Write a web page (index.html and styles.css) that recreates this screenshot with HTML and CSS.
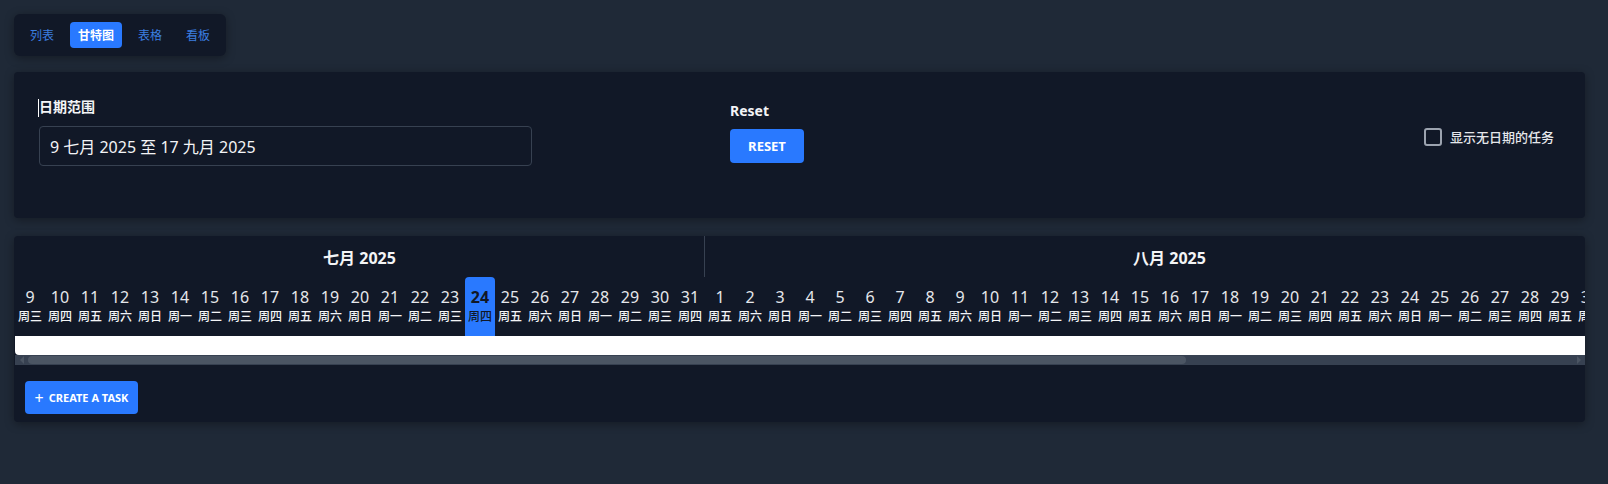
FILE: index.html
```html
<!DOCTYPE html>
<html lang="zh-CN">
<head>
    <meta charset="UTF-8">
    <meta name="viewport" content="width=device-width, initial-scale=1.0">
    <title>甘特图</title>
    <link rel="stylesheet" href="styles.css">
</head>
<body>
    <div class="view-tabs">
        <button class="view-tab">列表</button>
        <button class="view-tab active">甘特图</button>
        <button class="view-tab">表格</button>
        <button class="view-tab">看板</button>
    </div>

    <section class="panel filter-panel">
        <div class="field date-field">
            <label class="field-label"><span class="caret"></span>日期范围</label>
            <div class="date-input">9 七月 2025 至 17 九月 2025</div>
        </div>
        <div class="field reset-field">
            <div class="field-label">Reset</div>
            <button class="btn btn-primary btn-reset">RESET</button>
        </div>
        <label class="checkbox-field">
            <span class="checkbox"></span>
            <span>显示无日期的任务</span>
        </label>
    </section>

    <section class="panel gantt-panel">
        <div class="gantt-scroll">
            <div class="gantt-timeline">
                <div class="month-row" id="monthRow"></div>
                <div class="day-row" id="dayRow"></div>
                <div class="gantt-body"></div>
            </div>
        </div>
        <div class="scrollbar">
            <span class="scroll-btn"><span class="arrow arrow-left"></span></span>
            <div class="scroll-track"><div class="scroll-thumb"></div></div>
            <span class="scroll-btn"><span class="arrow arrow-right"></span></span>
        </div>
        <div class="gantt-footer">
            <button class="btn btn-primary btn-create"><span class="plus">+</span>CREATE A TASK</button>
        </div>
    </section>

    <script>
        // 时间轴参数
        const DAY_WIDTH = 30;
        const monthNames = ['一月', '二月', '三月', '四月', '五月', '六月', '七月', '八月', '九月', '十月', '十一月', '十二月'];
        const weekNames = ['周日', '周一', '周二', '周三', '周四', '周五', '周六'];

        const startDate = new Date(2025, 6, 9);
        const endDate = new Date(2025, 8, 17);
        const today = new Date(2025, 6, 24);

        function buildTimeline() {
            const monthRow = document.getElementById('monthRow');
            const dayRow = document.getElementById('dayRow');
            const groups = [];

            for (let d = new Date(startDate); d <= endDate; d.setDate(d.getDate() + 1)) {
                const key = d.getFullYear() + '-' + d.getMonth();
                let group = groups[groups.length - 1];
                if (!group || group.key !== key) {
                    group = { key: key, label: monthNames[d.getMonth()] + ' ' + d.getFullYear(), days: 0 };
                    groups.push(group);
                }
                group.days++;

                const cell = document.createElement('div');
                cell.className = 'day-cell';
                if (d.getTime() === today.getTime()) {
                    cell.classList.add('today');
                }
                cell.innerHTML = '<span class="day-num">' + d.getDate() + '</span>' +
                    '<span class="day-week">' + weekNames[d.getDay()] + '</span>';
                dayRow.appendChild(cell);
            }

            groups.forEach(function (group) {
                const cell = document.createElement('div');
                cell.className = 'month-cell';
                cell.style.width = (group.days * DAY_WIDTH) + 'px';
                cell.textContent = group.label;
                monthRow.appendChild(cell);
            });
        }

        buildTimeline();
    </script>
</body>
</html>
```

FILE: styles.css
```css
* {
    margin: 0;
    padding: 0;
    box-sizing: border-box;
}

body {
    font-family: 'Noto Sans', 'Noto Sans CJK SC', sans-serif;
    background: #1f2937;
    color: #f3f4f6;
    padding: 14px 23px 0 14px;
    min-height: 100vh;
}

button {
    font-family: inherit;
    border: none;
    cursor: pointer;
}

.panel {
    background: #111827;
    border-radius: 4px;
    box-shadow: 0 2px 10px rgba(0, 0, 0, 0.35);
}

/* 视图切换 */
.view-tabs {
    display: inline-flex;
    gap: 8px;
    padding: 8px;
    background: #111827;
    border-radius: 6px;
    box-shadow: 0 2px 10px rgba(0, 0, 0, 0.35);
}

.view-tab {
    height: 26px;
    padding: 0 8px;
    background: transparent;
    color: #3b7fe0;
    font-size: 12px;
    border-radius: 4px;
}

.view-tab.active {
    background: #2979ff;
    color: #fff;
    font-weight: bold;
}

/* 筛选区 */
.filter-panel {
    margin-top: 16px;
    height: 146px;
    padding: 26px 24px 0 25px;
    display: flex;
    align-items: flex-start;
}

.field {
    display: flex;
    flex-direction: column;
}

.date-field {
    width: 691px;
    gap: 10px;
}

.field-label {
    position: relative;
    font-size: 14px;
    font-weight: bold;
    line-height: 18px;
    color: #f3f4f6;
}

.caret {
    position: absolute;
    left: -1px;
    top: 1px;
    width: 1px;
    height: 18px;
    background: #fff;
}

.date-input {
    width: 493px;
    height: 40px;
    border: 1px solid #374151;
    border-radius: 4px;
    padding: 0 10px;
    display: flex;
    align-items: center;
    font-size: 16px;
    color: #f3f4f6;
}

.reset-field {
    flex: 1;
    padding-top: 4px;
    gap: 9px;
    align-items: flex-start;
}

.btn {
    display: inline-flex;
    align-items: center;
    justify-content: center;
    border-radius: 4px;
    font-weight: bold;
}

.btn-primary {
    background: #2979ff;
    color: #fff;
}

.btn-reset {
    width: 74px;
    height: 34px;
    font-size: 13px;
}

.checkbox-field {
    margin-top: 29px;
    padding-right: 7px;
    display: flex;
    align-items: center;
    gap: 8px;
    font-size: 13px;
    font-weight: 500;
    color: #e5e7eb;
}

.checkbox {
    width: 18px;
    height: 18px;
    border: 2px solid #9ca3af;
    border-radius: 3px;
}

/* 甘特图 */
.gantt-panel {
    margin-top: 18px;
    overflow: hidden;
}

.gantt-scroll {
    overflow: hidden;
    padding-left: 1px;
}

.gantt-timeline {
    width: max-content;
}

.month-row {
    display: flex;
    height: 41px;
}

.month-cell {
    display: flex;
    align-items: center;
    justify-content: center;
    border-right: 1px solid #374151;
    font-size: 16px;
    font-weight: bold;
    color: #f3f4f6;
}

.day-row {
    display: flex;
    height: 59px;
}

.day-cell {
    width: 30px;
    display: flex;
    flex-direction: column;
    align-items: center;
    padding-top: 9px;
    border-radius: 4px 4px 0 0;
}

.day-num {
    font-size: 16px;
    line-height: 22px;
    color: #e5e7eb;
}

.day-week {
    margin-top: 1px;
    font-size: 12px;
    line-height: 16px;
    font-weight: 500;
    color: #f3f4f6;
    white-space: nowrap;
}

.day-cell.today {
    background: #2979ff;
}

.day-cell.today .day-num {
    font-weight: bold;
    color: #111827;
}

.day-cell.today .day-week {
    color: #111827;
}

.gantt-body {
    height: 19px;
    background: #fff;
    border-radius: 0 0 0 4px;
}

/* 模拟滚动条 */
.scrollbar {
    display: flex;
    height: 10px;
    margin-left: 1px;
    background: #374151;
}

.scroll-btn {
    width: 13px;
    display: flex;
    align-items: center;
    justify-content: center;
}

.arrow {
    width: 0;
    height: 0;
    border-top: 4px solid transparent;
    border-bottom: 4px solid transparent;
}

.arrow-left {
    border-right: 4px solid #4b5563;
}

.arrow-right {
    border-left: 4px solid #4b5563;
}

.scroll-track {
    flex: 1;
    display: flex;
    align-items: center;
}

.scroll-thumb {
    width: 75%;
    height: 8px;
    background: #4b5563;
    border-radius: 4px;
}

.gantt-footer {
    padding: 16px 11px 8px;
}

.btn-create {
    width: 113px;
    height: 33px;
    padding: 0 8px;
    gap: 5px;
    font-size: 11px;
}

.plus {
    font-size: 16px;
    font-weight: normal;
    line-height: 1;
}
```
